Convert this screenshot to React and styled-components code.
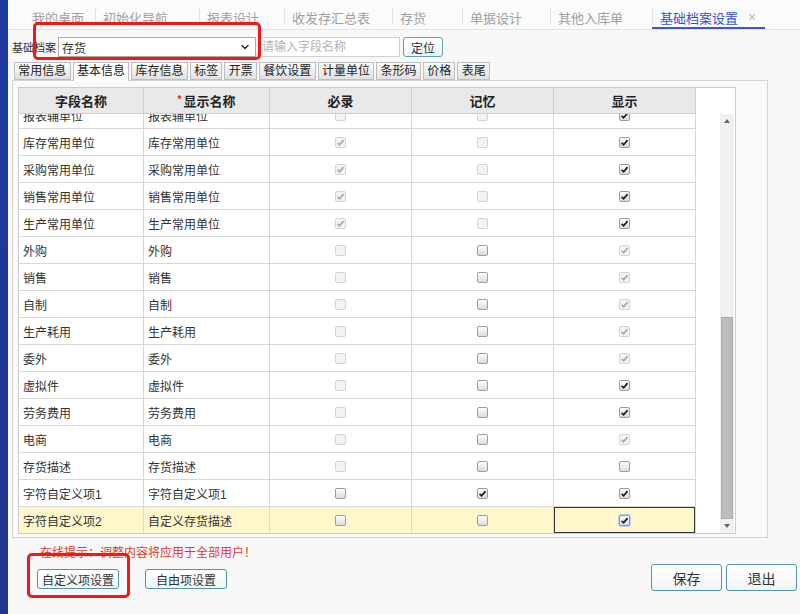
import React, { useLayoutEffect, useRef } from 'react';
import styled, { createGlobalStyle, css } from 'styled-components';
import { ChevronDown } from 'lucide-react';

const GlobalStyle = createGlobalStyle`
  html, body {
    margin: 0;
    padding: 0;
    background: #f8f8f8;
    font-family: "Liberation Sans", "Noto Sans CJK SC", sans-serif;
    color: #333;
  }
  * { box-sizing: border-box; }
`;

const Page = styled.div`
  display: flex;
  width: 800px;
  height: 614px;
  overflow: hidden;
`;

const SideStrip = styled.div`
  width: 8px;
  flex: none;
  background: linear-gradient(#1d3a9f, #22358f);
`;

const Main = styled.div`
  position: relative;
  flex: 1;
  display: flex;
  flex-direction: column;
`;

const TopBar = styled.div`
  display: flex;
  height: 30px;
  padding-left: 16px;
  background: #fbfbfb;
  border-bottom: 1px solid #e2e3ef;
`;

const TopTab = styled.div`
  position: relative;
  display: flex;
  align-items: center;
  width: ${p => p.$w}px;
  padding: 5px 0 0 8px;
  font-size: 13px;
  color: #a0a0a0;
  white-space: nowrap;
  ${p => p.$sep && css`
    &::before {
      content: '';
      position: absolute;
      left: 0;
      top: 8px;
      height: 17px;
      border-left: 1px solid #e4e4e4;
    }
  `}
  ${p => p.$active && css`
    color: #3551d8;
    &::after {
      content: '';
      position: absolute;
      left: 0;
      right: 0;
      bottom: 0;
      height: 2px;
      background: #3a57dc;
    }
  `}
`;

const CloseMark = styled.span`
  margin-left: 10px;
  font-size: 14px;
  color: #b8b8b8;
`;

const Toolbar = styled.div`
  display: flex;
  align-items: center;
  margin-top: 7px;
  padding-left: 4px;
  height: 20px;
`;

const FieldLabel = styled.span`
  width: 46px;
  font-size: 11px;
  color: #333;
`;

const SelectBox = styled.div`
  display: flex;
  align-items: center;
  justify-content: space-between;
  width: 198px;
  height: 20px;
  padding: 0 4px 0 3px;
  background: #fff;
  border: 1px solid #a9a9a9;
  font-size: 12px;
`;

const SearchInput = styled.input`
  margin-left: 2px;
  width: 142px;
  height: 20px;
  padding: 0 3px;
  border: 1px solid #cfcfcf;
  background: #fff;
  font-family: inherit;
  font-size: 12px;
  outline: none;
  &::placeholder { color: #b3b3b3; }
`;

const SmallButton = styled.button`
  margin-left: 3px;
  width: 40px;
  height: 20px;
  padding: 0;
  border: 1px solid #5e9fb9;
  border-radius: 3px;
  background: linear-gradient(#ffffff, #eef3f6);
  font-family: inherit;
  font-size: 12px;
  color: #333;
`;

const SubTabs = styled.div`
  display: flex;
  gap: 2px;
  margin-top: 5px;
  padding-left: 6px;
  height: 18px;
  position: relative;
  z-index: 1;
`;

const SubTab = styled.div`
  height: ${p => (p.$active ? 19 : 18)}px;
  padding: 0 3.3px;
  border: 1px solid #bdbdbd;
  border-bottom: ${p => (p.$active ? 'none' : '1px solid #bdbdbd')};
  background: ${p => (p.$active ? '#fff' : 'linear-gradient(#fbfbfb, #e1e1e1)')};
  font-size: 12px;
  line-height: 16px;
  color: #222;
  white-space: nowrap;
`;

const Panel = styled.div`
  margin-left: 4px;
  width: 756px;
  height: 458px;
  padding: 6px 0 0 5px;
  border: 1px solid #d3d3d3;
  background: #f9f9f9;
`;

const Grid = styled.div`
  display: flex;
  flex-direction: column;
  width: 718px;
  height: 447px;
  border: 1px solid #cdcdcd;
  background: #fff;
`;

const columns = '125px 126px 142px 142px 142px';

const HeadRow = styled.div`
  display: grid;
  grid-template-columns: ${columns};
  width: 677px;
  height: 26px;
  background: #e9e9e9;
  border-bottom: 1px solid #cfcfcf;
`;

const HeadCell = styled.div`
  display: flex;
  align-items: center;
  justify-content: center;
  border-right: 1px solid #cfcfcf;
  font-size: 13px;
  font-weight: bold;
  color: #222;
`;

const Star = styled.span`
  color: #e02020;
  font-size: 10px;
  margin-right: 2px;
  align-self: flex-start;
  margin-top: 6px;
`;

const Body = styled.div`
  display: flex;
  flex: 1;
  min-height: 0;
`;

const Viewport = styled.div`
  flex: 1;
  overflow: hidden;
`;

const Row = styled.div`
  display: grid;
  grid-template-columns: ${columns};
  width: 677px;
  height: 27px;
  background: ${p => (p.$selected ? '#fff7cb' : '#fff')};
  border-bottom: 1px solid #d8d8d8;
`;

const Cell = styled.div`
  display: flex;
  align-items: center;
  justify-content: ${p => (p.$center ? 'center' : 'flex-start')};
  padding-left: ${p => (p.$center ? 0 : 4)}px;
  border-right: 1px solid #d8d8d8;
  font-size: 12px;
  color: #333;
  white-space: nowrap;
  ${p => p.$current && css`
    box-shadow: inset 1px 1px 0 #333, inset -1px -1px 0 #333;
  `}
`;

const Box = styled.span`
  display: inline-flex;
  align-items: center;
  justify-content: center;
  width: 11px;
  height: 11px;
  border-radius: 2px;
  ${p => p.$enabled ? css`
    border: 1px solid #9c9c9c;
    background: linear-gradient(#fdfdfd, #dcdcdc);
  ` : css`
    border: 1px solid #d4d4d4;
    background: #f3f3f3;
  `}
  ${p => p.$focus && css`
    border-color: #6d9bd6;
    box-shadow: 0 0 0 1px #bcd3f0;
  `}
`;

const ScrollBar = styled.div`
  display: flex;
  flex-direction: column;
  width: 14px;
  margin-right: 1px;
  background: #f0f0f0;
`;

const ScrollArrow = styled.div`
  display: flex;
  align-items: center;
  justify-content: center;
  height: 14px;
  flex: none;
`;

const ScrollTrack = styled.div`
  flex: 1;
  display: flex;
  flex-direction: column;
  justify-content: flex-end;
  padding: 0 1px;
`;

const Thumb = styled.div`
  height: 202px;
  background: #bcbcbc;
  border: 1px solid #ababab;
`;

const Footer = styled.div`
  display: flex;
  justify-content: space-between;
  align-items: flex-start;
`;

const FooterLeft = styled.div`
  display: flex;
  flex-direction: column;
  padding-left: 29px;
`;

const Hint = styled.div`
  margin: 8px 0 0 3px;
  font-size: 12px;
  line-height: 14px;
  color: #e3382c;
`;

const ButtonRow = styled.div`
  display: flex;
  gap: ${p => p.$gap}px;
  margin-top: ${p => p.$top}px;
  padding-right: ${p => p.$right || 0}px;
`;

const ActionButton = styled.button`
  width: ${p => p.$w}px;
  height: ${p => p.$h}px;
  padding: 0;
  border: 1px solid #4e95b0;
  border-radius: 3px;
  background: linear-gradient(#ffffff, #f1f4f6);
  font-family: inherit;
  font-size: ${p => p.$size}px;
  color: #333;
`;

const Highlight = styled.div`
  position: absolute;
  left: ${p => p.$x}px;
  top: ${p => p.$y}px;
  width: ${p => p.$w}px;
  height: ${p => p.$h}px;
  border: 3px solid #f21818;
  border-radius: 5px;
  pointer-events: none;
`;

const topTabs = [
  { name: '我的桌面', w: 71 },
  { name: '初始化导航', w: 104 },
  { name: '报表设计', w: 85 },
  { name: '收发存汇总表', w: 108 },
  { name: '存货', w: 70 },
  { name: '单据设计', w: 88 },
  { name: '其他入库单', w: 102 },
  { name: '基础档案设置', w: 113, active: true },
];

const subTabs = ['常用信息', '基本信息', '库存信息', '标签', '开票', '餐饮设置', '计量单位', '条形码', '价格', '表尾'];

// d = 不可编辑, e = 可编辑; 0/1 = 未勾选/勾选
const rows = [
  ['报表辅单位', '报表辅单位', 'd0', 'd0', 'e1'],
  ['库存常用单位', '库存常用单位', 'd1', 'd0', 'e1'],
  ['采购常用单位', '采购常用单位', 'd1', 'd0', 'e1'],
  ['销售常用单位', '销售常用单位', 'd1', 'd0', 'e1'],
  ['生产常用单位', '生产常用单位', 'd1', 'd0', 'e1'],
  ['外购', '外购', 'd0', 'e0', 'd1'],
  ['销售', '销售', 'd0', 'e0', 'd1'],
  ['自制', '自制', 'd0', 'e0', 'd1'],
  ['生产耗用', '生产耗用', 'd0', 'e0', 'd1'],
  ['委外', '委外', 'd0', 'e0', 'd1'],
  ['虚拟件', '虚拟件', 'd0', 'e0', 'e1'],
  ['劳务费用', '劳务费用', 'd0', 'e0', 'e1'],
  ['电商', '电商', 'd0', 'e0', 'd1'],
  ['存货描述', '存货描述', 'd0', 'e0', 'e0'],
  ['字符自定义项1', '字符自定义项1', 'e0', 'e1', 'e1'],
  ['字符自定义项2', '自定义存货描述', 'e0', 'e0', 'e1'],
];

const Check = ({ code, focus }) => {
  const enabled = code[0] === 'e';
  const checked = code[1] === '1';
  return (
    <Box $enabled={enabled} $focus={focus}>
      {checked && (
        <svg width="9" height="9" viewBox="0 0 10 10">
          <path
            d="M1.8 5.4 L4 7.6 L8.4 2.4"
            fill="none"
            stroke={enabled ? '#1e1e1e' : '#a9a9a9'}
            strokeWidth="1.9"
          />
        </svg>
      )}
    </Box>
  );
};

const Triangle = ({ up }) => (
  <svg width="6" height="4" viewBox="0 0 6 4">
    <path d={up ? 'M0 4 L3 0 L6 4 Z' : 'M0 0 L6 0 L3 4 Z'} fill="#666" />
  </svg>
);

const App = () => {
  const viewRef = useRef(null);

  // 表格已向下滚动一点，第一行只露出下半部分
  useLayoutEffect(() => {
    if (viewRef.current) viewRef.current.scrollTop = 12;
  }, []);

  return (
    <Page>
      <GlobalStyle />
      <SideStrip />
      <Main>
        <TopBar>
          {topTabs.map((t, i) => (
            <TopTab key={t.name} $w={t.w} $sep={i > 0} $active={t.active}>
              {t.name}
              {t.active && <CloseMark>×</CloseMark>}
            </TopTab>
          ))}
        </TopBar>

        <Toolbar>
          <FieldLabel>基础档案</FieldLabel>
          <SelectBox>
            <span>存货</span>
            <ChevronDown size={12} strokeWidth={3} color="#333" />
          </SelectBox>
          <SearchInput placeholder="请输入字段名称" />
          <SmallButton>定位</SmallButton>
        </Toolbar>

        <SubTabs>
          {subTabs.map(name => (
            <SubTab key={name} $active={name === '基本信息'}>{name}</SubTab>
          ))}
        </SubTabs>

        <Panel>
          <Grid>
            <HeadRow>
              <HeadCell>字段名称</HeadCell>
              <HeadCell><Star>*</Star>显示名称</HeadCell>
              <HeadCell>必录</HeadCell>
              <HeadCell>记忆</HeadCell>
              <HeadCell>显示</HeadCell>
            </HeadRow>
            <Body>
              <Viewport ref={viewRef}>
                {rows.map((r, i) => {
                  const last = i === rows.length - 1;
                  return (
                    <Row key={r[0] + i} $selected={last}>
                      <Cell>{r[0]}</Cell>
                      <Cell>{r[1]}</Cell>
                      <Cell $center><Check code={r[2]} /></Cell>
                      <Cell $center><Check code={r[3]} /></Cell>
                      <Cell $center $current={last}><Check code={r[4]} focus={last} /></Cell>
                    </Row>
                  );
                })}
              </Viewport>
              <ScrollBar>
                <ScrollArrow><Triangle up /></ScrollArrow>
                <ScrollTrack>
                  <Thumb />
                </ScrollTrack>
                <ScrollArrow><Triangle /></ScrollArrow>
              </ScrollBar>
            </Body>
          </Grid>
        </Panel>

        <Footer>
          <FooterLeft>
            <Hint>在线提示：调整内容将应用于全部用户！</Hint>
            <ButtonRow $gap={26} $top={9}>
              <ActionButton $w={82} $h={20} $size={12}>自定义项设置</ActionButton>
              <ActionButton $w={82} $h={20} $size={12}>自由项设置</ActionButton>
            </ButtonRow>
          </FooterLeft>
          <ButtonRow $gap={4} $top={26} $right={3}>
            <ActionButton $w={71} $h={27} $size={14}>保存</ActionButton>
            <ActionButton $w={71} $h={27} $size={14}>退出</ActionButton>
          </ButtonRow>
        </Footer>

        <Highlight $x={25} $y={22} $w={228} $h={38} />
        <Highlight $x={19} $y={553} $w={103} $h={45} />
      </Main>
    </Page>
  );
};

export default App;
